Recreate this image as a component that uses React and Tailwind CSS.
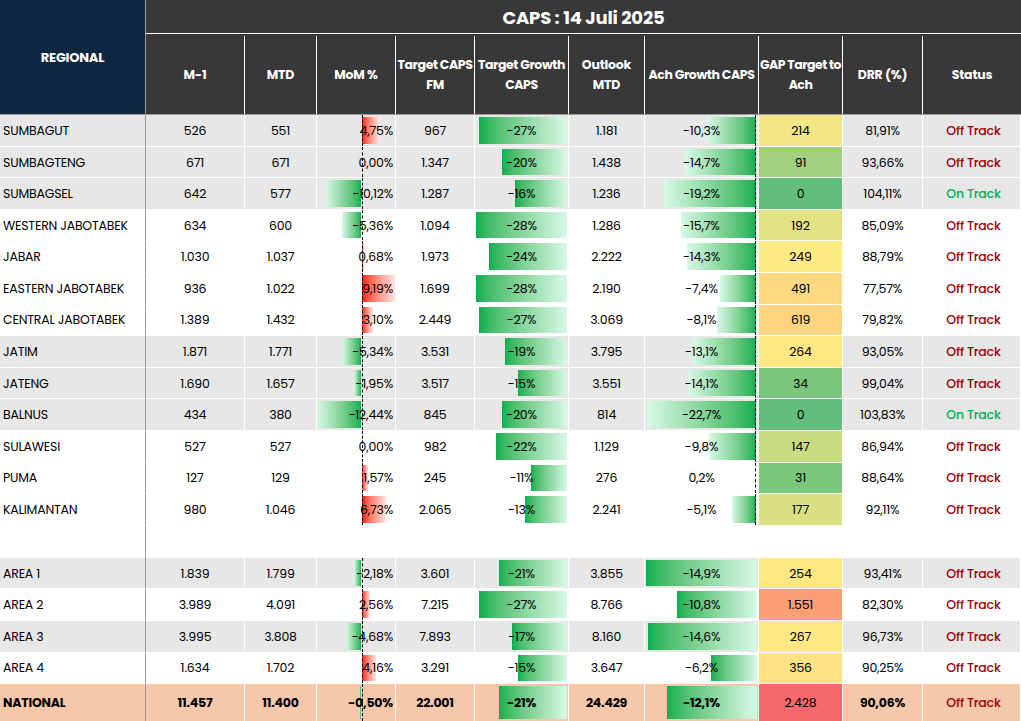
import React from 'react';

const GRID = 'grid grid-cols-[146px_99px_72px_79px_79px_94px_76px_114px_84px_80px_98px]';

const regional = [
    { name: 'SUMBAGUT', m1: '526', mtd: '551', mom: 4.75, tcf: '967', tg: -27, out: '1.181', ach: -10.3, gap: '214', gapBg: 'bg-[#f2e784]', drr: '81,91%', on: false, gray: true },
    { name: 'SUMBAGTENG', m1: '671', mtd: '671', mom: 0, tcf: '1.347', tg: -20, out: '1.438', ach: -14.7, gap: '91', gapBg: 'bg-[#a0d07f]', drr: '93,66%', on: false, gray: true },
    { name: 'SUMBAGSEL', m1: '642', mtd: '577', mom: -10.12, tcf: '1.287', tg: -16, out: '1.236', ach: -19.2, gap: '0', gapBg: 'bg-[#63be7b]', drr: '104,11%', on: true, gray: true },
    { name: 'WESTERN JABOTABEK', m1: '634', mtd: '600', mom: -5.36, tcf: '1.094', tg: -28, out: '1.286', ach: -15.7, gap: '192', gapBg: 'bg-[#e3e283]', drr: '85,09%', on: false, gray: false },
    { name: 'JABAR', m1: '1.030', mtd: '1.037', mom: 0.68, tcf: '1.973', tg: -24, out: '2.222', ach: -14.3, gap: '249', gapBg: 'bg-[#feea83]', drr: '88,79%', on: false, gray: false },
    { name: 'EASTERN JABOTABEK', m1: '936', mtd: '1.022', mom: 9.19, tcf: '1.699', tg: -28, out: '2.190', ach: -7.4, gap: '491', gapBg: 'bg-[#fed980]', drr: '77,57%', on: false, gray: false },
    { name: 'CENTRAL JABOTABEK', m1: '1.389', mtd: '1.432', mom: 3.1, tcf: '2.449', tg: -27, out: '3.069', ach: -8.1, gap: '619', gapBg: 'bg-[#fdd480]', drr: '79,82%', on: false, gray: false },
    { name: 'JATIM', m1: '1.871', mtd: '1.771', mom: -5.34, tcf: '3.531', tg: -19, out: '3.795', ach: -13.1, gap: '264', gapBg: 'bg-[#ffe884]', drr: '93,05%', on: false, gray: true },
    { name: 'JATENG', m1: '1.690', mtd: '1.657', mom: -1.95, tcf: '3.517', tg: -15, out: '3.551', ach: -14.1, gap: '34', gapBg: 'bg-[#7bc67d]', drr: '99,04%', on: false, gray: true },
    { name: 'BALNUS', m1: '434', mtd: '380', mom: -12.44, tcf: '845', tg: -20, out: '814', ach: -22.7, gap: '0', gapBg: 'bg-[#63be7b]', drr: '103,83%', on: true, gray: true },
    { name: 'SULAWESI', m1: '527', mtd: '527', mom: 0, tcf: '982', tg: -22, out: '1.129', ach: -9.8, gap: '147', gapBg: 'bg-[#c8dd81]', drr: '86,94%', on: false, gray: false },
    { name: 'PUMA', m1: '127', mtd: '129', mom: 1.57, tcf: '245', tg: -11, out: '276', ach: 0.2, gap: '31', gapBg: 'bg-[#7ac67d]', drr: '88,64%', on: false, gray: false },
    { name: 'KALIMANTAN', m1: '980', mtd: '1.046', mom: 6.73, tcf: '2.065', tg: -13, out: '2.241', ach: -5.1, gap: '177', gapBg: 'bg-[#dae182]', drr: '92,11%', on: false, gray: false },
];

const areas = [
    { name: 'AREA 1', m1: '1.839', mtd: '1.799', mom: -2.18, tcf: '3.601', tg: -21, out: '3.855', ach: -14.9, gap: '254', gapBg: 'bg-[#ffe884]', drr: '93,41%', gray: true },
    { name: 'AREA 2', m1: '3.989', mtd: '4.091', mom: 2.56, tcf: '7.215', tg: -27, out: '8.766', ach: -10.8, gap: '1.551', gapBg: 'bg-[#fa9e75]', drr: '82,30%', gray: false },
    { name: 'AREA 3', m1: '3.995', mtd: '3.808', mom: -4.68, tcf: '7.893', tg: -17, out: '8.160', ach: -14.6, gap: '267', gapBg: 'bg-[#ffe883]', drr: '96,73%', gray: true },
    { name: 'AREA 4', m1: '1.634', mtd: '1.702', mom: 4.16, tcf: '3.291', tg: -15, out: '3.647', ach: -6.2, gap: '356', gapBg: 'bg-[#fee283]', drr: '90,25%', gray: false },
];

const national = { name: 'NATIONAL', m1: '11.457', mtd: '11.400', mom: -0.5, tcf: '22.001', tg: -21, out: '24.429', ach: -12.1, gap: '2.428', gapBg: 'bg-[#f8696b]', drr: '90,06%' };

const pct = (v, d) => `${v.toFixed(d).replace('.', ',')}%`;

const Cell = ({ children, className = '' }) => (
    <div className={`relative flex items-center justify-center pt-[2px] border-r border-b border-white ${className}`}>
        {children}
    </div>
);

// MoM: bars grow from a dashed axis, green to the left, red to the right
const MomCell = ({ v, scale }) => (
    <Cell className="justify-end pr-[2px]">
        {v < 0 && (
            <div className="absolute top-[2px] bottom-[2px] right-[34px] bg-linear-to-r from-[#d8f9e7] to-[#00b050]" style={{ width: Math.abs(v) * scale }} />
        )}
        {v > 0 && (
            <div className="absolute top-[2px] bottom-[2px] left-[45px] bg-linear-to-r from-[#ff0000] to-[#ffe4e4]" style={{ width: v * scale }} />
        )}
        <div className="absolute top-0 bottom-0 left-[45px] border-l border-dashed border-black" />
        <span className="relative">{pct(v, 2)}</span>
    </Cell>
);

const RightBar = ({ v, scale, axis }) => (
    <div
        className={`absolute top-[2px] bottom-[2px] ${axis ? 'right-[2px] bg-linear-to-r from-[#d8f9e7] to-[#00b050]' : 'right-[1px] bg-linear-to-r from-[#00b050] to-[#d8f9e7]'}`}
        style={{ width: Math.abs(v) * scale }}
    />
);

const Row = ({ r, bg, bold, h, momScale, achScale, achAxis, status }) => (
    <div className={`${GRID} ${bg} ${h} ${bold ? 'font-bold' : ''}`}>
        <div className="flex items-center pl-[3px] pt-[2px] border-r border-[#9a9a9a] border-b border-b-white">{r.name}</div>
        <Cell>{r.m1}</Cell>
        <Cell>{r.mtd}</Cell>
        <MomCell v={r.mom} scale={momScale} />
        <Cell>{r.tcf}</Cell>
        <Cell>
            <RightBar v={r.tg} scale={3.25} />
            <span className="relative">{`${r.tg}%`}</span>
        </Cell>
        <Cell>{r.out}</Cell>
        <Cell>
            {r.ach < 0 && <RightBar v={r.ach} scale={achScale} axis={achAxis} />}
            {achAxis && <div className="absolute top-0 bottom-0 right-[2px] border-l border-dashed border-black" />}
            <span className="relative">{pct(r.ach, 1)}</span>
        </Cell>
        <Cell className={`${r.gapBg} ${bold ? 'font-normal' : ''}`}>{r.gap}</Cell>
        <Cell>{r.drr}</Cell>
        <Cell className={`font-medium pl-[4px] ${status ? 'text-[#00b050]' : 'text-[#9c0006]'}`}>{status ? 'On Track' : 'Off Track'}</Cell>
    </div>
);

const Head = ({ w, children, last, className = '' }) => (
    <div className={`${w} flex items-center justify-center whitespace-nowrap ${last ? '' : 'border-r border-white'} ${className}`}>
        <span>{children}</span>
    </div>
);

export default function App() {
    return (
        <div className="w-[1021px] h-[721px] overflow-hidden bg-white text-[12.5px] text-black font-['Poppins','Inter','Noto_Sans',sans-serif] tracking-[-0.2px]">
            {/* Header */}
            <div className="flex text-white font-bold border-b border-[#9a9a9a]">
                <div className="w-[146px] h-[114px] flex items-center justify-center bg-[#0f2641] border-r border-[#9a9a9a] text-[13px] pt-[2px]">
                    REGIONAL
                </div>
                <div className="flex-1 flex flex-col bg-[#383838]">
                    <div className="h-[34px] flex items-center justify-center text-[18px] border-b border-white pt-[1px]">
                        CAPS : 14 Juli 2025
                    </div>
                    <div className="flex flex-1 text-[12.5px] leading-[20px] text-center pt-[2px]">
                        <Head w="w-[99px]">M-1</Head>
                        <Head w="w-[72px]">MTD</Head>
                        <Head w="w-[79px]">MoM %</Head>
                        <Head w="w-[79px]" className="tracking-[-0.4px]">Target CAPS<br />FM</Head>
                        <Head w="w-[94px]" className="tracking-[-0.4px]">Target Growth<br />CAPS</Head>
                        <Head w="w-[76px]">Outlook<br />MTD</Head>
                        <Head w="w-[114px]" className="tracking-[-0.4px]">Ach Growth CAPS</Head>
                        <Head w="w-[84px]" className="tracking-[-0.5px]">GAP Target to<br />Ach</Head>
                        <Head w="w-[80px]">DRR (%)</Head>
                        <Head w="w-[98px]" last>Status</Head>
                    </div>
                </div>
            </div>

            {/* Regional rows */}
            {regional.map((r) => (
                <Row key={r.name} r={r} bg={r.gray ? 'bg-[#e7e7e7]' : 'bg-white'} h="h-[31.6px]" momScale={3.54} achScale={4.8} achAxis status={r.on} />
            ))}

            {/* spacer */}
            <div className={`${GRID} h-[32px]`}>
                <div className="border-r border-[#9a9a9a]" />
            </div>

            {/* Areas */}
            {areas.map((r) => (
                <Row key={r.name} r={r} bg={r.gray ? 'bg-[#e7e7e7]' : 'bg-white'} h="h-[31.6px]" momScale={3.3} achScale={7.45} status={false} />
            ))}
            <Row r={national} bg="bg-[#f7c7aa]" bold h="h-[38px]" momScale={3.3} achScale={7.45} status={false} />
        </div>
    );
}
